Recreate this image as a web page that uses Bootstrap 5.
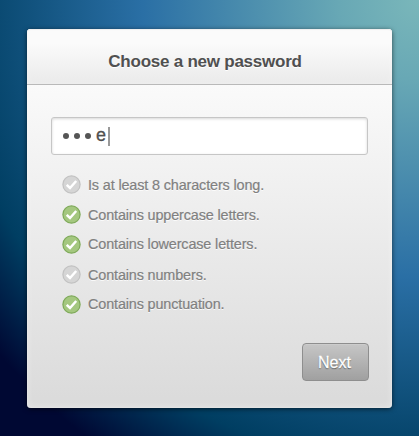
<!DOCTYPE html>
<html lang="en">
<head>
<meta charset="utf-8">
<meta name="viewport" content="width=device-width, initial-scale=1">
<title>Choose a new password</title>
<link href="https://cdn.jsdelivr.net/npm/bootstrap@5.3.0/dist/css/bootstrap.min.css" rel="stylesheet">
<style>
html, body { height: 100%; overflow: hidden; }
body {
  font-family: "Liberation Sans", Arial, sans-serif;
  background: radial-gradient(circle at 100% 0, #7ab7ba 0, #68a8b5 80px, #2a6fa5 277px, #003e62 467px, #000833 549px);
}
.password-card {
  width: 365px; height: 379px; margin: 29px 0 0 27px;
  border: 0; border-radius: 4px;
  background: linear-gradient(#fafafa 56px, #dadada);
  box-shadow: 0 1px 5px rgba(0,0,0,.6), inset 0 0 7px rgba(255,255,255,.4), inset 0 0 1px #fff;
}
.password-card .card-header {
  height: 56px; padding: 10px 9px 0 0;
  background: linear-gradient(#fbfbfb 25%, #eaeaea);
  border-bottom: 1px solid #b9b9b9; border-radius: 4px 4px 0 0;
  box-shadow: inset 0 1px 1px #eee, inset 0 0 6px rgba(255,255,255,.4);
}
.password-card h1 { font-size: 17px; color: #505050; line-height: 20px; text-shadow: 0 1px 0 #fff; letter-spacing: -.24px; }
.password-card .card-body { padding: 32px 23px 0 24px; }
.secret {
  width: 317px; height: 38px; padding-left: 11px;
  background: #fff; border: 1px solid #c6c6c6; border-radius: 3px;
  box-shadow: inset 0 1px 3px rgba(0,0,0,.16);
  color: #505050; font-size: 18px; line-height: 20px;
}
.dot { width: 6px; height: 6px; background: #555; border-radius: 50%; margin-right: 5px; }
.typed { margin: -2px 0 0; width: 10px; -webkit-text-stroke: .3px #505050; }
.caret { width: 2px; height: 19px; background: #999; margin-left: 2px; }
.rules { margin: 20px 0 0 11px; padding: 0; font-size: 14.4px; line-height: 20px; color: #808080; text-shadow: 0 1px 0 rgba(255,255,255,.8); letter-spacing: -.13px; -webkit-text-stroke: .2px #808080; }
.rules li { height: 30px; }
.rules li:nth-child(3) span, .rules li:nth-child(5) span { margin-top: -1px; }
.rules svg { width: 19px; height: 19px; margin-right: 7px; flex: none; fill: #d5d5d5; stroke: #c1c1c1; }
.rules .met svg { fill: #a4c77f; stroke: #7da957; }
.next-btn {
  width: 67px; height: 38px; padding: 0; margin: 18px 0 0;
  background: linear-gradient(#c6c6c6, #a0a0a0);
  border: 1px solid #8e8e8e; border-radius: 4px;
  box-shadow: inset 0 1px 0 #ccc;
  color: #fff; font-size: 16px; line-height: 37px; padding-right: 2px; text-shadow: 0 1px 1px rgba(0,0,0,.6);
  -webkit-text-stroke: .3px #fff;
}
</style>
<script src="https://cdn.jsdelivr.net/npm/bootstrap@5.3.0/dist/js/bootstrap.bundle.min.js" defer></script>
</head>
<body>
<svg class="d-none" aria-hidden="true">
  <symbol id="check" viewBox="0 0 19 19">
    <circle cx="9.5" cy="9.5" r="8.6" stroke-width="1.2"/>
    <path d="M4.7 9.9 8 13 14.2 6" fill="none" stroke="#fff" stroke-width="2.5"/>
  </symbol>
</svg>
<main class="card password-card">
  <header class="card-header d-flex align-items-center justify-content-center">
    <h1 class="mb-0 fw-bold">Choose a new password</h1>
  </header>
  <div class="card-body d-flex flex-column">
    <div class="secret d-flex align-items-center" role="textbox" aria-label="New password">
      <span class="dot"></span><span class="dot"></span><span class="dot"></span>
      <span class="typed">e</span><span class="caret"></span>
    </div>
    <ul class="rules list-unstyled">
      <li class="d-flex align-items-start"><svg><use href="#check"/></svg><span>Is at least 8 characters long.</span></li>
      <li class="d-flex align-items-start met"><svg><use href="#check"/></svg><span>Contains uppercase letters.</span></li>
      <li class="d-flex align-items-start met"><svg><use href="#check"/></svg><span>Contains lowercase letters.</span></li>
      <li class="d-flex align-items-start"><svg><use href="#check"/></svg><span>Contains numbers.</span></li>
      <li class="d-flex align-items-start met"><svg><use href="#check"/></svg><span>Contains punctuation.</span></li>
    </ul>
    <button type="button" class="btn next-btn align-self-end">Next</button>
  </div>
</main>
</body>
</html>
